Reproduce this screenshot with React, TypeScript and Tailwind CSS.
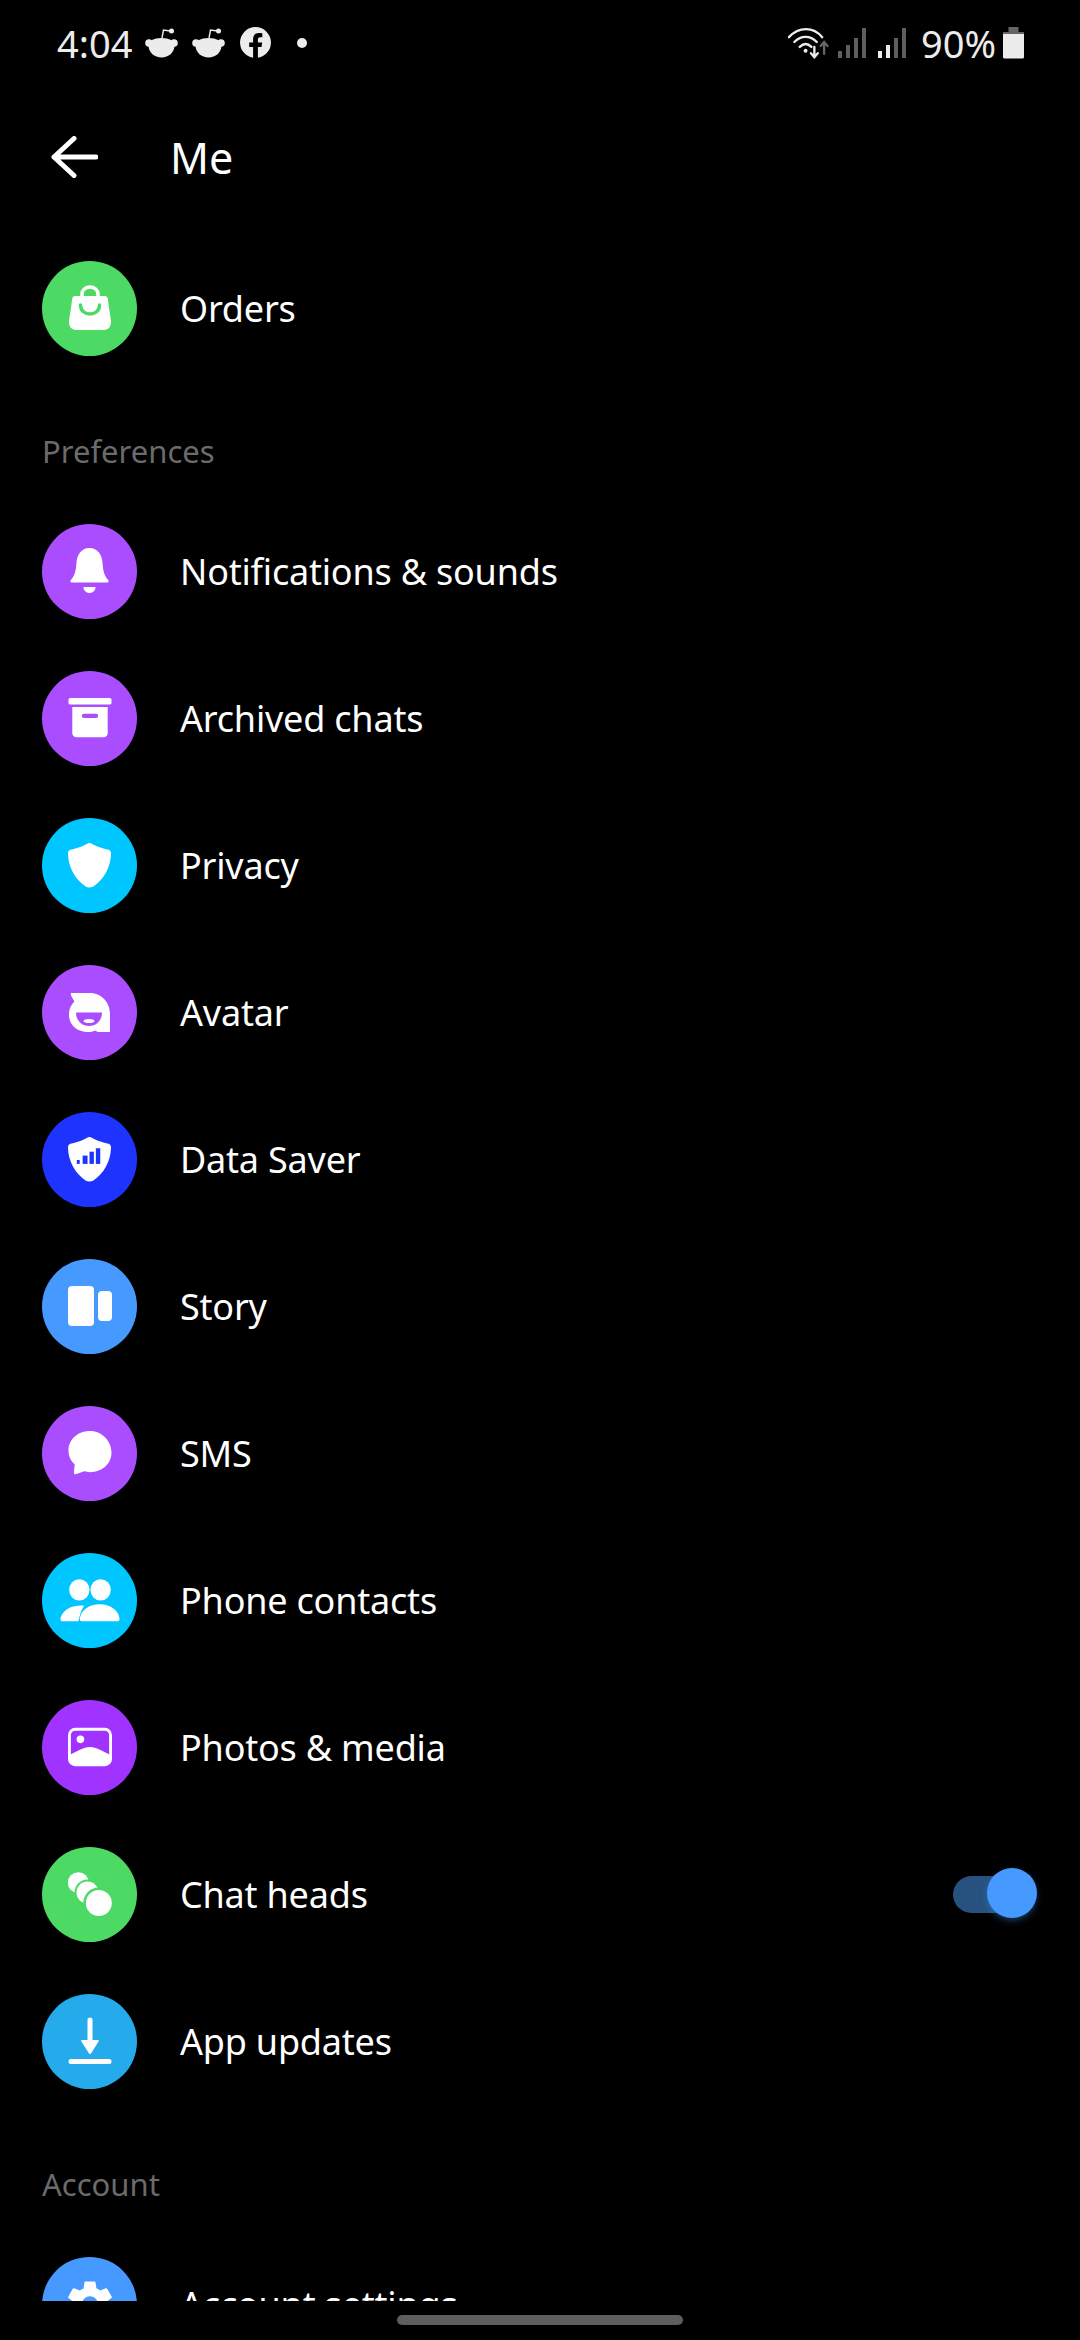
import React from 'react';

const FONT = "font-['Noto_Sans','Open_Sans',sans-serif]";

function Bag() {
  return (
    <svg width="44" height="46" viewBox="0 0 44 46">
      <path d="M14 12V9a8 7 0 0 1 16 0v3" fill="none" stroke="#fff" strokeWidth="3.500" />
      <path d="M7 11h30c1.500 0 2.500 1 2.700 2.500L43 36c.4 5-2.500 9-7 9H8c-4.500 0-7.400-4-7-9l3.300-22.500C4.500 12 5.500 11 7 11z" fill="#fff" />
      <path d="M12.500 20c0 12 19 12 19 0" fill="none" stroke="#4cd964" strokeWidth="3.400" strokeLinecap="round" />
    </svg>
  );
}

function Bell() {
  return (
    <svg width="41" height="48" viewBox="0 0 44 48" preserveAspectRatio="none">
      <path d="M22 1C13 1 8.500 8 8 16c-.5 8-2 13-6 17-1 1.200-.6 2.500 1 2.500h38c1.600 0 2-1.300 1-2.500-4-4-5.500-9-6-17C35.500 8 31 1 22 1z" fill="#fff" />
      <path d="M15.500 40h13c0 3.500-3 6-6.500 6s-6.500-2.500-6.500-6z" fill="#fff" />
    </svg>
  );
}

function Archive() {
  return (
    <svg width="44" height="42" viewBox="0 0 46 42">
      <rect x="0.500" y="0" width="45" height="7" rx="2" fill="#fff" />
      <path d="M4.500 9.500h37V37c0 2.500-1.500 4-4 4H8.500c-2.500 0-4-1.500-4-4z" fill="#fff" />
      <rect x="14.500" y="16.500" width="17" height="4.500" rx="2.200" fill="#a94dff" />
    </svg>
  );
}

function Shield({ children }: { children?: React.ReactNode }) {
  return (
    <svg width="43" height="45" viewBox="0 0 44 46">
      <path d="M22 0c2 0 4 2 8 3.500 4 1.500 9 2.500 11.500 3.500 1.500.6 2.500 1.500 2.500 3.500C44 25 36 38 26 44.500c-2.500 1.500-5.500 1.500-8 0C8 38 0 25 0 10.500 0 8.500 1 7.600 2.500 7 5 6 10 5 14 3.500 18 2 20 0 22 0z" fill="#fff" />
      {children}
    </svg>
  );
}

function AvatarFace() {
  return (
    <svg width="41" height="39" viewBox="0 0 41 39">
      <path d="M2 0h19c11 0 20 9 20 21v18H29l-3-1.500c-2 1-4.500 1.500-7 1.500C8 39 0 32 0 22c0-6 2-10 5.500-13.500L2.500 3.500C2 2 1.500 1 2 0z" fill="#fff" />
      <path d="M7 19.500h26c0 8-5.500 13.500-13 13.500S7 27.500 7 19.500z" fill="#a94dff" />
      <ellipse cx="20" cy="28" rx="5.500" ry="2" fill="#fff" />
    </svg>
  );
}

function StoryIcon() {
  return (
    <svg width="44" height="40" viewBox="0 0 44 40">
      <rect x="0" y="0" width="26" height="40" rx="4" fill="#fff" />
      <rect x="30" y="5" width="14" height="30" rx="4" fill="#fff" />
    </svg>
  );
}

function Bubble() {
  return (
    <svg width="44" height="44" viewBox="0 0 46 46">
      <path d="M23 0C10 0 .5 9 .5 20.500c0 6 2.500 11 6.500 14.500l-.8 8c-.1 1.800 1 2.500 2.700 2l8-2.800c2 .5 4 .8 6.100.8 13 0 22.500-9 22.500-20.500S36 0 23 0z" fill="#fff" />
    </svg>
  );
}

function People() {
  return (
    <svg width="60" height="43" viewBox="0 0 62 44">
      <ellipse cx="20" cy="11" rx="10.500" ry="11" fill="#fff" />
      <ellipse cx="42" cy="11" rx="10.500" ry="11" fill="#fff" />
      <path d="M25 27.500C17 26 4 29 .500 40c-.5 2 .5 3.500 2.500 3.500h16c1.500-6.500 3-12 6-16z" fill="#fff" />
      <path d="M41 26c-11 0-19 6-20.500 14.500-.2 2 .8 3 2.500 3h36c1.700 0 2.700-1 2.500-3C60 32 52 26 41 26z" fill="#fff" />
    </svg>
  );
}

function Photo() {
  return (
    <svg width="44" height="40" viewBox="0 0 46 40">
      <rect x="1.500" y="1.500" width="43" height="37" rx="6" fill="none" stroke="#fff" strokeWidth="3" />
      <path d="M2 28c7-3 14-8 21-8s14 5 21 8v5c0 3-2 6-6 6H8c-4 0-6-3-6-6z" fill="#fff" />
      <circle cx="13" cy="12" r="4" fill="#fff" />
    </svg>
  );
}

function Heads() {
  return (
    <svg width="50" height="50" viewBox="0 0 50 50">
      <circle cx="13.300" cy="13.700" r="10.500" fill="#fff" />
      <circle cx="22.500" cy="23.500" r="13" fill="#4cd964" />
      <circle cx="22.500" cy="23.500" r="11" fill="#fff" />
      <circle cx="33.800" cy="34" r="15.500" fill="#4cd964" />
      <circle cx="33.800" cy="34" r="13" fill="#fff" />
    </svg>
  );
}

function Download() {
  return (
    <svg width="44" height="48" viewBox="0 0 44 48">
      <path d="M22 3v20" fill="none" stroke="#fff" strokeWidth="5" strokeLinecap="round" />
      <path d="M14 23h16c.8 0 1.100.7.7 1.300L23 36.500c-.5.7-1.500.7-2 0L13.300 24.300c-.4-.6-.1-1.300.7-1.300z" fill="#fff" />
      <rect x="0.500" y="42" width="43" height="5" rx="2.500" fill="#fff" />
    </svg>
  );
}

function Gear() {
  return (
    <svg width="54" height="54" viewBox="0 0 24 24">
      <path fill="#fff" d="M19.400 13c.04-.33.06-.66.06-1s-.02-.67-.06-1l2.100-1.650c.2-.15.25-.42.120-.64l-2-3.460c-.12-.22-.39-.3-.61-.22l-2.490 1c-.52-.4-1.080-.73-1.690-.98l-.38-2.650A.49.49 0 0 0 14 2h-4c-.25 0-.46.18-.49.42l-.38 2.650c-.61.25-1.170.59-1.690.98l-2.490-1c-.23-.09-.49 0-.61.22l-2 3.460c-.13.22-.07.49.12.64L4.570 11c-.04.33-.07.67-.07 1s.03.67.07 1l-2.110 1.650c-.19.15-.25.42-.12.64l2 3.460c.12.22.39.3.61.22l2.490-1c.52.4 1.080.73 1.690.98l.38 2.650c.03.24.24.42.49.42h4c.25 0 .46-.18.49-.42l.38-2.650c.61-.25 1.170-.59 1.690-.98l2.490 1c.23.09.49 0 .61-.22l2-3.460c.12-.22.07-.49-.12-.64zM12 15.500a3.500 3.500 0 1 1 0-7 3.500 3.500 0 0 1 0 7z" />
    </svg>
  );
}

function Row({ label, color, icon, right }: { label: string; color: string; icon: React.ReactNode; right?: React.ReactNode }) {
  return (
    <div className="flex h-[147px] items-center pl-[42px] pr-[43px]">
      <div className={`flex h-[95px] w-[95px] shrink-0 items-center justify-center rounded-full ${color}`}>{icon}</div>
      <span className="ml-[43px] flex-1 pt-[2px] text-[36px] leading-[50px] tracking-[-0.2px] text-white">{label}</span>
      {right}
    </div>
  );
}

function SectionLabel({ children }: { children: string }) {
  return (
    <div className="flex h-[116px] items-start pl-[42px] pt-[53px] text-[31px] leading-[32px] text-[#6b6b6b]">{children}</div>
  );
}

function Toggle() {
  return (
    <div className="relative h-[37px] w-[84px]">
      <div className="h-full w-[68px] rounded-full bg-[#27527f]" />
      <div className="absolute right-0 top-[-8px] h-[50px] w-[50px] rounded-full bg-[#4599ff] shadow-[0_3px_6px_rgba(69,153,255,0.35)]" />
    </div>
  );
}

function Snoo() {
  return (
    <svg width="33" height="30" viewBox="0 0 33 30">
      <path d="M17 10l1.500-8 7 1" fill="none" stroke="#ececec" strokeWidth="1.400" />
      <circle cx="26.500" cy="3" r="2.500" fill="#ececec" />
      <circle cx="4" cy="15" r="3.800" fill="#ececec" />
      <circle cx="29" cy="15" r="3.800" fill="#ececec" />
      <path d="M16.500 10c-8 0-13 3-13 7.500 0 7 6 12 13 12s13-5 13-12c0-4.500-5-7.500-13-7.500z" fill="#ececec" />
    </svg>
  );
}

function Signal({ lit }: { lit: number }) {
  const bars = [10, 18, 28, 44];
  return (
    <div className="flex h-[30px] items-end gap-[4px]">
      {bars.map((h, i) => (
        <div key={i} className={i < lit ? 'w-[4px] bg-[#ececec]' : 'w-[4px] bg-[#5e5e5e]'} style={{ height: (h * 30) / 44 }} />
      ))}
    </div>
  );
}

function StatusBar() {
  return (
    <div className="flex h-[84px] items-center justify-between pl-[57px] pr-[56px] pt-[1px] text-[38px] text-[#ececec]">
      <div className="flex items-center">
        <span className="w-[88px] leading-none">4:04</span>
        <Snoo />
        <div className="ml-[14px]"><Snoo /></div>
        <svg className="ml-[15px]" width="31" height="31" viewBox="0 0 31 31">
          <path fill="#ececec" d="M15.500 0a15.500 15.500 0 0 0-2.400 30.800V20h-3.900v-4.500h3.900V12.100c0-3.900 2.300-6 5.800-6 1.700 0 3.400.3 3.400.3v3.800h-1.900c-1.900 0-2.500 1.200-2.500 2.400v2.900h4.300l-.7 4.500h-3.600v10.800A15.500 15.500 0 0 0 15.500 0z" />
        </svg>
        <div className="ml-[26px] h-[10px] w-[10px] rounded-full bg-[#ececec]" />
      </div>
      <div className="flex items-center">
        <svg width="41" height="32" viewBox="0 0 42 32" fill="none" stroke="#ececec" strokeWidth="2.400" strokeLinecap="round">
          <path d="M1 10c10-11 25-11 34 0" />
          <path d="M6.500 15c7-7 16-7 23 0" />
          <path d="M12 20c4-4 8-4 12 0" />
          <circle cx="18" cy="24" r="2" fill="#ececec" stroke="none" />
          <path d="M27 20v10M23.500 26.500l3.500 4 3.500-4" strokeWidth="2.400" />
          <path d="M37 27V16M33.500 19l3.500-4 3.500 4" stroke="#666" strokeWidth="2.400" />
        </svg>
        <div className="ml-[9px]"><Signal lit={0} /></div>
        <div className="ml-[12px]"><Signal lit={2} /></div>
        <span className="ml-[15px] leading-none">90%</span>
        <svg className="ml-[7px]" width="21" height="32" viewBox="0 0 21 32">
          <rect x="5.500" y="0" width="10" height="5" fill="#666" />
          <path d="M0 5h21v2H0z" fill="#666" />
          <path d="M0 7h21v23a1.500 1.500 0 0 1-1.500 1.500h-18A1.500 1.500 0 0 1 0 30z" fill="#ececec" />
        </svg>
      </div>
    </div>
  );
}

export default function App() {
  return (
    <div className={`relative h-[2340px] w-[1080px] overflow-hidden bg-black ${FONT}`}>
      <StatusBar />
      <div className="flex h-[146px] items-center pl-[50px]">
        <svg width="48" height="42" viewBox="0 0 48 42" fill="none" stroke="#fff" strokeWidth="5" strokeLinecap="round" strokeLinejoin="round">
          <path d="M4 21h42M24 2.500 4 21l20 18.500" />
        </svg>
        <span className="ml-[72px] text-[43px] leading-none text-white">Me</span>
      </div>
      <div className="h-[2071px] overflow-hidden">
        <div className="h-[4.500px]" />
        <Row label="Orders" color="bg-[#4cd964]" icon={<Bag />} />
        <SectionLabel>Preferences</SectionLabel>
        <Row label="Notifications & sounds" color="bg-[#a94dff]" icon={<Bell />} />
        <Row label="Archived chats" color="bg-[#a94dff]" icon={<Archive />} />
        <Row label="Privacy" color="bg-[#00c6ff]" icon={<Shield />} />
        <Row label="Avatar" color="bg-[#a94dff]" icon={<AvatarFace />} />
        <Row
          label="Data Saver"
          color="bg-[#1f33ff]"
          icon={
            <Shield>
              <rect x="9" y="23.500" width="3" height="4" fill="#1f33ff" />
              <rect x="15" y="19" width="5" height="8.500" fill="#1f33ff" />
              <rect x="22" y="15" width="4.500" height="12.500" fill="#1f33ff" />
              <rect x="28.500" y="11.500" width="4.500" height="16" fill="#1f33ff" />
            </Shield>
          }
        />
        <Row label="Story" color="bg-[#4599ff]" icon={<StoryIcon />} />
        <Row label="SMS" color="bg-[#a94dff]" icon={<Bubble />} />
        <Row label="Phone contacts" color="bg-[#00c6ff]" icon={<People />} />
        <Row label="Photos & media" color="bg-[#a033ff]" icon={<Photo />} />
        <Row label="Chat heads" color="bg-[#4cd964]" icon={<Heads />} right={<Toggle />} />
        <Row label="App updates" color="bg-[#25aaeb]" icon={<Download />} />
        <SectionLabel>Account</SectionLabel>
        <Row label="Account settings" color="bg-[#4599ff]" icon={<Gear />} />
      </div>
      <div className="mt-[14px] ml-[397px] h-[10px] w-[286px] rounded-full bg-[#5e5e5e]" />
    </div>
  );
}
